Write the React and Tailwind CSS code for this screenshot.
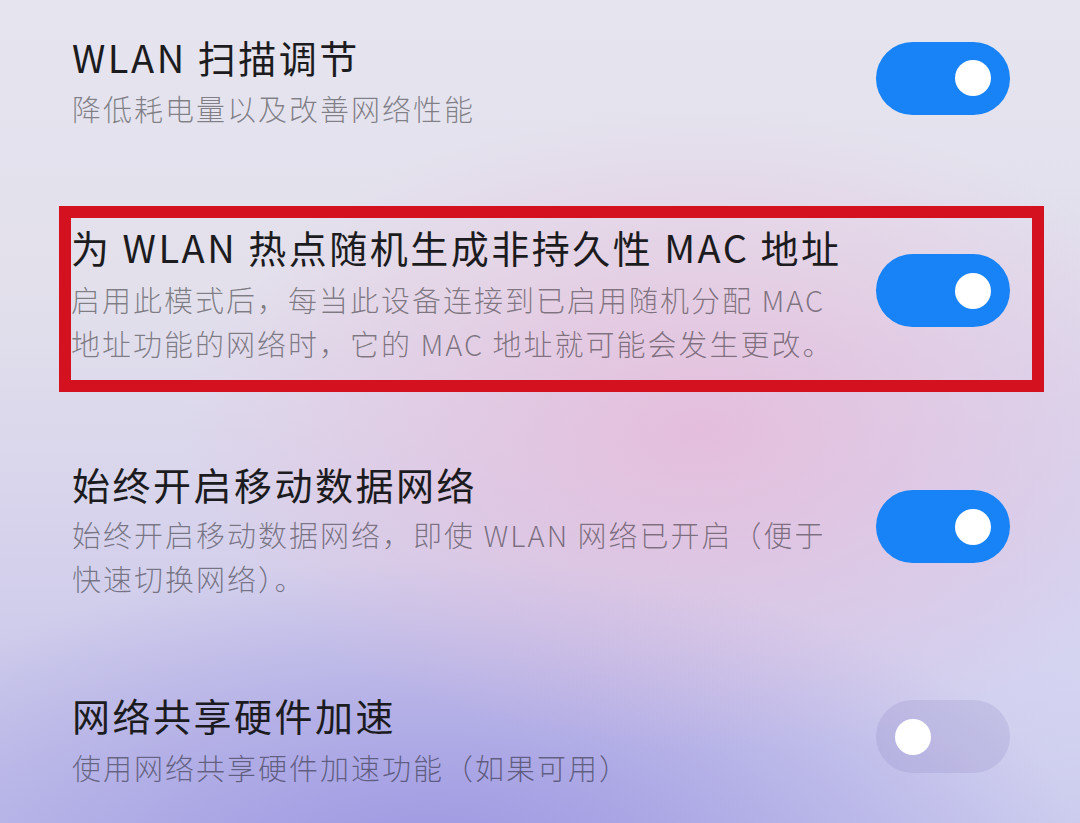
import React from "react";

const font = { fontFamily: '"Noto Sans CJK SC", "Noto Sans", sans-serif' };

function Toggle({ on }) {
  return (
    <div
      className={
        "shrink-0 w-[134px] h-[73px] rounded-full flex items-center mb-[7px] " +
        (on ? "bg-[#1783f7] justify-end pr-[19px]" : "bg-[#6f68b0]/15 justify-start pl-[19px]")
      }
    >
      <div className="w-[36px] h-[36px] rounded-full bg-white" />
    </div>
  );
}

function Row({ title, desc, on, gap }) {
  return (
    <div className="flex items-center justify-between">
      <div className="flex flex-col">
        <div className="text-[38px] leading-[48px] tracking-[2.5px] text-[#1b1b20] whitespace-nowrap">{title}</div>
        <div className={"text-[29px] leading-[44px] tracking-[2px] text-black/45 font-light whitespace-nowrap " + gap}>
          {desc}
        </div>
      </div>
      <Toggle on={on} />
    </div>
  );
}

export default function App() {
  return (
    <div
      className="w-[1080px] h-[823px] overflow-hidden bg-[radial-gradient(ellipse_520px_320px_at_700px_430px,rgba(230,186,218,0.85),transparent),radial-gradient(ellipse_650px_300px_at_430px_860px,rgba(158,152,226,1),transparent),radial-gradient(ellipse_500px_500px_at_1080px_650px,rgba(214,214,242,0.8),transparent),linear-gradient(180deg,#e5e4ef_0%,#e3e0ec_35%,#d6d2ec_65%,#c2c1ea_100%)]"
      style={font}
    >
      <div className="flex flex-col pt-[33px]">
        <div className="ml-[72px] mr-[70px]">
          <Row title="WLAN 扫描调节" desc="降低耗电量以及改善网络性能" on gap="mt-[5px]" />
        </div>

        <div className="mt-[76px] ml-[59px] w-[985px] border-[12px] border-[#d3111f] pl-[0px] pr-[22px] pt-[5px] pb-[15px]">
          <Row
            title="为 WLAN 热点随机生成非持久性 MAC 地址"
            desc={
              <>
                启用此模式后，每当此设备连接到已启用随机分配 MAC
                <br />
                地址功能的网络时，它的 MAC 地址就可能会发生更改。
              </>
            }
            on
            gap="mt-[6px]"
          />
        </div>

        <div className="mt-[68px] ml-[72px] mr-[70px]">
          <Row
            title="始终开启移动数据网络"
            desc={
              <>
                始终开启移动数据网络，即使 WLAN 网络已开启（便于
                <br />
                快速切换网络）。
              </>
            }
            on
            gap="mt-[4px]"
          />
        </div>

        <div className="mt-[91px] ml-[72px] mr-[70px]">
          <Row title="网络共享硬件加速" desc="使用网络共享硬件加速功能（如果可用）" on={false} gap="mt-[6px]" />
        </div>
      </div>
    </div>
  );
}
